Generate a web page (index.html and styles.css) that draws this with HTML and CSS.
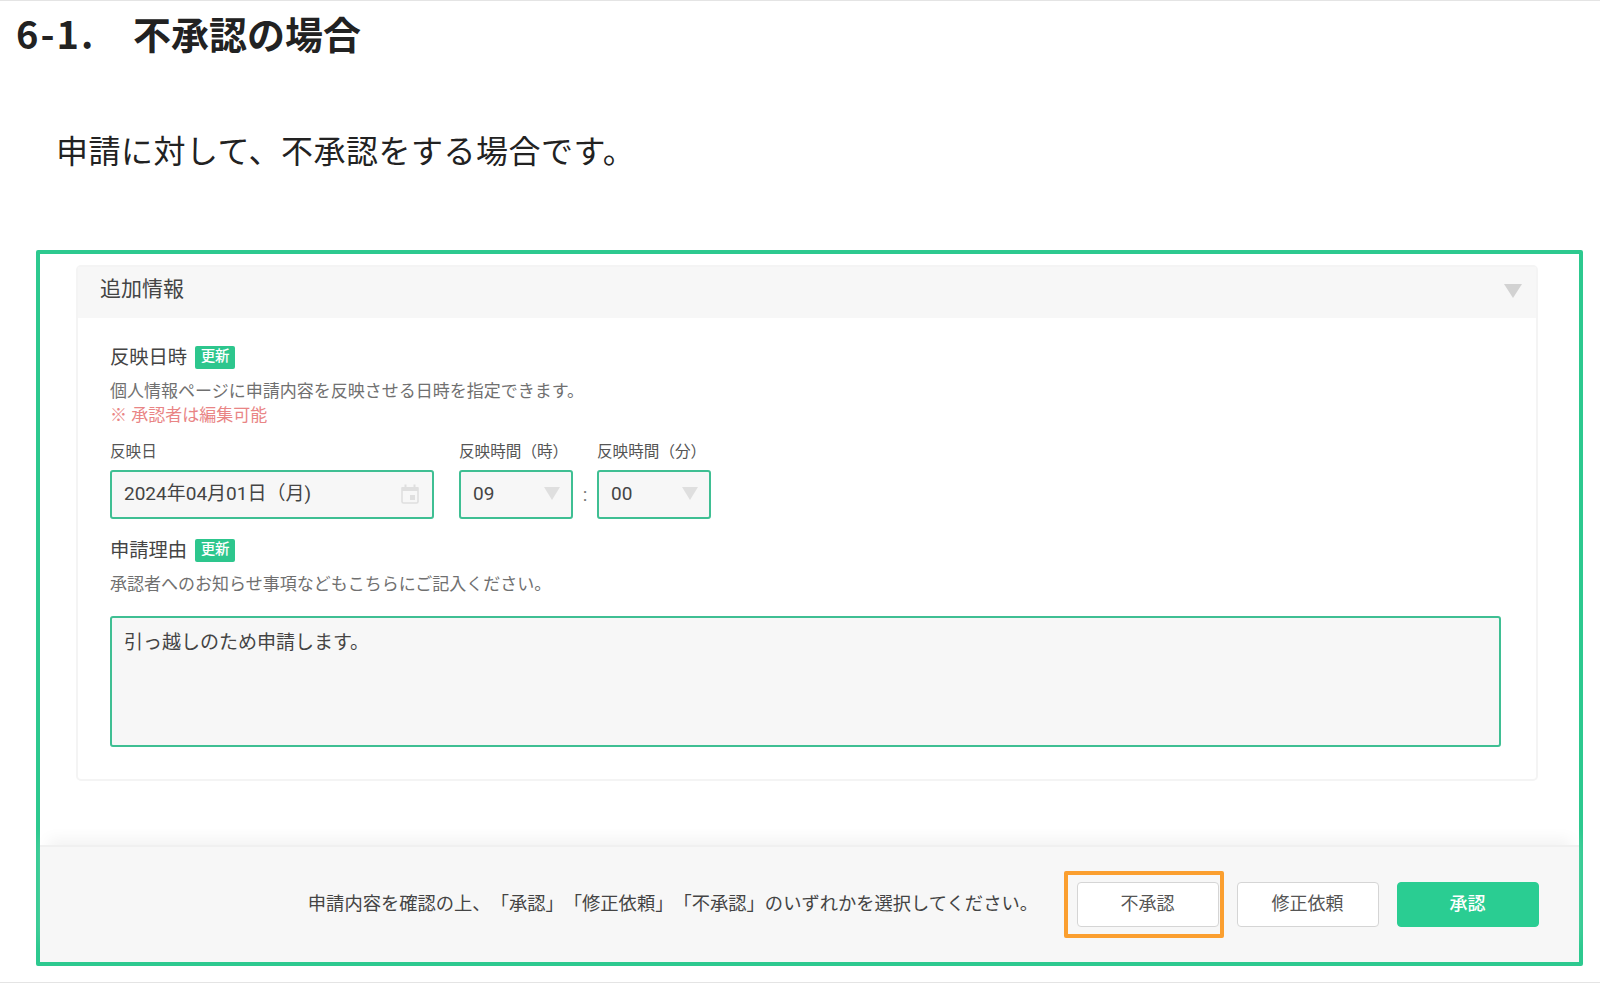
FILE: index.html
```html
<!DOCTYPE html>
<html lang="ja">
<head>
    <meta charset="UTF-8">
    <meta name="viewport" content="width=device-width, initial-scale=1.0">
    <title>不承認の場合</title>
    <link rel="stylesheet" href="styles.css">
</head>
<body>
    <main class="page">
        <h1><span class="number">6-1.</span>不承認の場合</h1>
        <p class="lead">申請に対して、不承認をする場合です。</p>

        <div class="frame">
            <!-- Additional information -->
            <section class="panel">
                <header class="panel-header">
                    <h2>追加情報</h2>
                    <svg class="toggle" width="18" height="14" viewBox="0 0 18 14"><path d="M0 0h18L9 14z" fill="#d2d2d2"/></svg>
                </header>
                <div class="panel-body">
                    <div class="title">反映日時<span class="badge">更新</span></div>
                    <p class="description">個人情報ページに申請内容を反映させる日時を指定できます。</p>
                    <p class="description note">※ 承認者は編集可能</p>

                    <div class="fields">
                        <div class="field date">
                            <label>反映日</label>
                            <div class="input">
                                <span>2024年04月01日（月)</span>
                                <svg class="calendar" width="18" height="20" viewBox="0 0 18 20">
                                    <path d="M1 4h16v13.5a1.5 1.5 0 0 1-1.5 1.5h-13A1.5 1.5 0 0 1 1 17.500z" fill="none" stroke="#dfdfdf" stroke-width="1.600"/>
                                    <path d="M1 3h16v4H1zM3.500 0.500h2V3h-2zM12.500 0.500h2V3h-2zM9 11h5v5H9z" fill="#dfdfdf"/>
                                </svg>
                            </div>
                        </div>
                        <div class="field time">
                            <label>反映時間（時）</label>
                            <div class="input">
                                <span>09</span>
                                <svg width="16" height="13" viewBox="0 0 16 13"><path d="M0 0h16L8 13z" fill="#dfdfdf"/></svg>
                            </div>
                        </div>
                        <span class="colon">:</span>
                        <div class="field time">
                            <label>反映時間（分）</label>
                            <div class="input">
                                <span>00</span>
                                <svg width="16" height="13" viewBox="0 0 16 13"><path d="M0 0h16L8 13z" fill="#dfdfdf"/></svg>
                            </div>
                        </div>
                    </div>

                    <div class="title">申請理由<span class="badge">更新</span></div>
                    <p class="description">承認者へのお知らせ事項などもこちらにご記入ください。</p>
                    <div class="reason">引っ越しのため申請します。</div>
                </div>
            </section>

            <!-- Approval buttons -->
            <footer class="actions">
                <p>申請内容を確認の上、「承認」「修正依頼」「不承認」のいずれかを選択してください。</p>
                <div class="highlight"><button>不承認</button></div>
                <button>修正依頼</button>
                <button class="primary">承認</button>
            </footer>
        </div>
    </main>
</body>
</html>
```
FILE: styles.css
```css
* {
    box-sizing: border-box;
}
body {
    margin: 0;
    background-color: #fff;
    color: #444;
    font-family: Roboto, 'Noto Sans CJK JP', sans-serif;
    text-spacing-trim: space-all;
}
h1, h2, p {
    margin: 0;
}
svg {
    display: block;
    flex: none;
}
.page {
    height: 983px;
    border-top: 1px solid #e4e4e4;
    border-bottom: 1px solid #e4e4e4;
    overflow: hidden;
}
h1 {
    display: flex;
    height: 70px;
    padding-left: 16px;
    line-height: 64px;
    font-family: 'Noto Sans CJK JP', sans-serif;
    font-size: 38px;
    font-weight: bold;
    color: #222;
}
.number {
    width: 117px;
    letter-spacing: 2px;
}
.lead {
    height: 179px;
    padding: 46px 0 0 56px;
    line-height: 64px;
    font-family: 'Noto Sans CJK JP', sans-serif;
    font-size: 32px;
    letter-spacing: 0.5px;
    color: #222;
}
.frame {
    display: flex;
    flex-direction: column;
    width: 1547px;
    height: 716px;
    margin-left: 36px;
    border: 4px solid #2dc98f;
    border-radius: 2px;
}
.panel {
    height: 516px;
    margin: 11px 41px 0 36px;
    border: 2px solid #f4f4f4;
    border-radius: 5px;
}
.panel-header {
    display: flex;
    align-items: center;
    justify-content: space-between;
    height: 51px;
    padding: 0 14px 4px 22px;
    background-color: #f7f7f7;
}
h2 {
    margin-top: -4px;
    font-size: 21px;
    font-weight: normal;
    line-height: 30px;
}
.panel-body {
    padding: 24px 35px 0 32px;
}
.title {
    display: flex;
    align-items: center;
    height: 32px;
    font-size: 19.3px;
    line-height: 32px;
}
.badge {
    width: 40px;
    height: 23px;
    margin: -1px 0 0 8px;
    border-radius: 2px;
    background-color: #2dc68d;
    color: #fff;
    font-size: 14.5px;
    font-weight: 500;
    line-height: 21px;
    text-align: center;
}
.description {
    height: 24px;
    margin-top: 5px;
    font-size: 17px;
    line-height: 24px;
    color: #707070;
}
.note {
    margin-top: 0;
    color: #e98585;
}
.fields {
    display: flex;
    align-items: flex-end;
    height: 92px;
    margin-bottom: 16px;
}
.field label {
    display: block;
    height: 30px;
    font-size: 15.6px;
    line-height: 24px;
    color: #555;
}
.date {
    width: 324px;
    margin-right: 25px;
}
.time {
    width: 114px;
}
.input {
    display: flex;
    align-items: center;
    justify-content: space-between;
    height: 49px;
    padding: 0 11px 2px 12px;
    border: 2px solid #3fbf93;
    border-radius: 3px;
    background-color: #f7f7f7;
    font-size: 19px;
    line-height: 22px;
}
.date .input {
    padding-right: 13px;
}
.colon {
    width: 24px;
    height: 36px;
    font-size: 19px;
    text-align: center;
    color: #777;
}
.reason {
    height: 131px;
    margin-top: 20px;
    padding: 11px 12px;
    border: 2px solid #3fbf93;
    border-radius: 3px;
    background-color: #f7f7f7;
    font-size: 19px;
    line-height: 28px;
}
.actions {
    display: flex;
    align-items: center;
    justify-content: flex-end;
    height: 117px;
    margin-top: auto;
    padding-right: 40px;
    border-top: 2px solid #f0f0f0;
    background-color: #f7f7f7;
    box-shadow: 0 -14px 14px -8px #f3f3f3;
    font-size: 18.3px;
}
.actions p {
    padding-bottom: 5px;
    white-space: nowrap;
}
.highlight {
    padding: 7px 1px 7px 9px;
    margin: 0 13px 0 26px;
    border: 4px solid #fb9f2f;
    border-radius: 2px;
}
button {
    display: block;
    width: 142px;
    height: 45px;
    padding: 0 1px 5px 0;
    border: 1px solid #d5d5d5;
    border-radius: 4px;
    background-color: #fff;
    color: #555;
    font-family: inherit;
    font-size: 18px;
}
.primary {
    margin-left: 18px;
    border-color: #2acd92;
    background-color: #2acd92;
    color: #fff;
    font-weight: 500;
}
```
